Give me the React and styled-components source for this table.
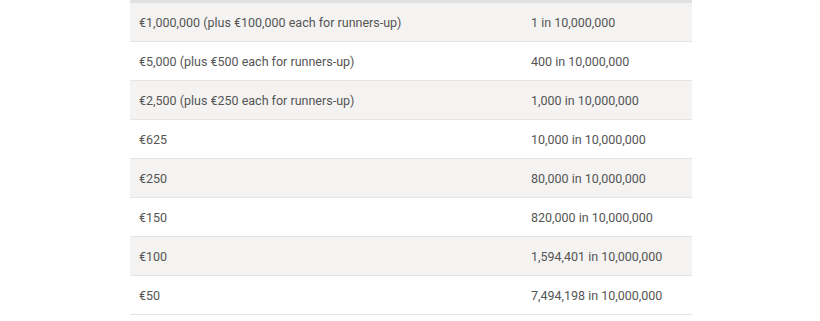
import styled, { createGlobalStyle } from "styled-components";

const GlobalStyle = createGlobalStyle`
  html, body {
    margin: 0;
    padding: 0;
    background: #fff;
  }
`;

// 전체 페이지
const Page = styled.div`
  display: flex;
  justify-content: flex-start;
  padding-left: 130px;
  height: 321px;
  overflow: hidden;
`;

const Table = styled.div`
  width: 562px;
  border-top: 3px solid #e1e1e1;
  font-family: Roboto, "Liberation Sans", sans-serif;
  font-size: 12.5px;
  color: #555;
`;

const Row = styled.div`
  display: grid;
  grid-template-columns: 392px 1fr;
  align-items: center;
  box-sizing: border-box;
  height: 39px;
  background: ${(p) => (p.$shaded ? "#f4f3f1" : "#fff")};
  border-bottom: 1px solid #e4e4e4;
`;

const Cell = styled.div`
  padding-left: 9px;
`;

const rows = [
  ["€1,000,000 (plus €100,000 each for runners-up)", "1 in 10,000,000"],
  ["€5,000 (plus €500 each for runners-up)", "400 in 10,000,000"],
  ["€2,500 (plus €250 each for runners-up)", "1,000 in 10,000,000"],
  ["€625", "10,000 in 10,000,000"],
  ["€250", "80,000 in 10,000,000"],
  ["€150", "820,000 in 10,000,000"],
  ["€100", "1,594,401 in 10,000,000"],
  ["€50", "7,494,198 in 10,000,000"],
];

export default function App() {
  return (
    <>
      <GlobalStyle />
      <Page>
        <Table>
          {rows.map(([prize, odds], i) => (
            <Row key={prize} $shaded={i % 2 === 0}>
              <Cell>{prize}</Cell>
              <Cell>{odds}</Cell>
            </Row>
          ))}
        </Table>
      </Page>
    </>
  );
}
